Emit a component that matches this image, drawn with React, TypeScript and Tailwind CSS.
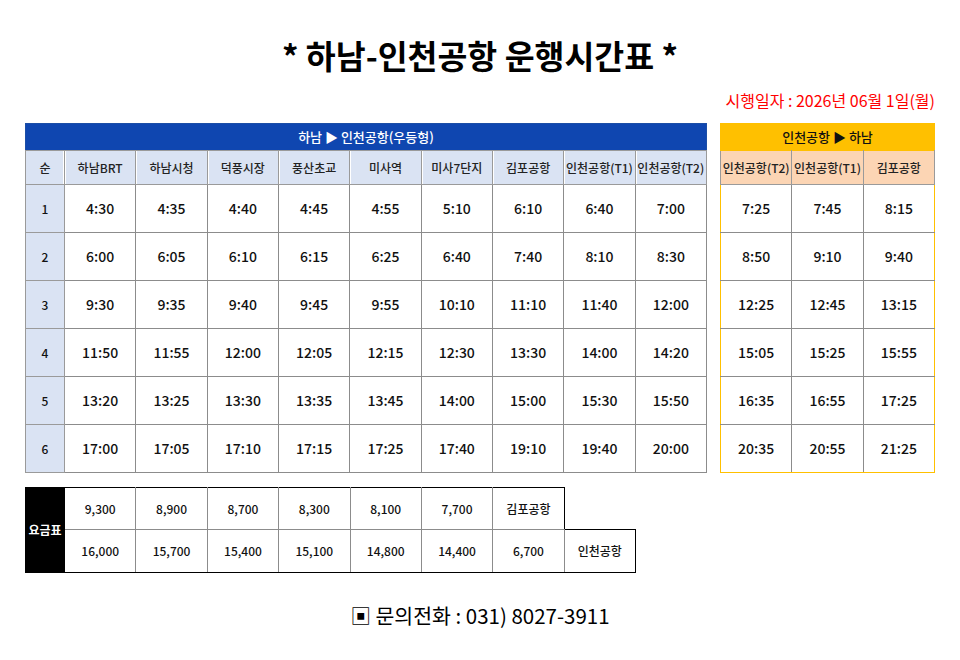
const outStops = ['하남BRT', '하남시청', '덕풍시장', '풍산초교', '미사역', '미사7단지', '김포공항', '인천공항(T1)', '인천공항(T2)']

const outTimes = [
  ['4:30', '4:35', '4:40', '4:45', '4:55', '5:10', '6:10', '6:40', '7:00'],
  ['6:00', '6:05', '6:10', '6:15', '6:25', '6:40', '7:40', '8:10', '8:30'],
  ['9:30', '9:35', '9:40', '9:45', '9:55', '10:10', '11:10', '11:40', '12:00'],
  ['11:50', '11:55', '12:00', '12:05', '12:15', '12:30', '13:30', '14:00', '14:20'],
  ['13:20', '13:25', '13:30', '13:35', '13:45', '14:00', '15:00', '15:30', '15:50'],
  ['17:00', '17:05', '17:10', '17:15', '17:25', '17:40', '19:10', '19:40', '20:00'],
]

const backStops = ['인천공항(T2)', '인천공항(T1)', '김포공항']

const backTimes = [
  ['7:25', '7:45', '8:15'],
  ['8:50', '9:10', '9:40'],
  ['12:25', '12:45', '13:15'],
  ['15:05', '15:25', '15:55'],
  ['16:35', '16:55', '17:25'],
  ['20:35', '20:55', '21:25'],
]

const toGimpo = ['9,300', '8,900', '8,700', '8,300', '8,100', '7,700']
const toIncheon = ['16,000', '15,700', '15,400', '15,100', '14,800', '14,400', '6,700']

const font = { fontFamily: '"Noto Sans CJK KR", "Noto Sans", sans-serif' }

export default function App() {
  return (
    <div className="w-[960px] h-[660px] bg-white px-[25px] text-[#111]" style={font}>
      <h1 className="pt-[34px] text-center text-[32.5px] font-bold leading-[42px] text-black">
        * 하남-인천공항 운행시간표 *
      </h1>
      <p className="mt-[14px] text-right text-[16px] leading-[20px] text-[#ff0000]">
        시행일자 : 2026년 06월 1일(월)
      </p>

      <div className="mt-[13px] flex items-start gap-[13px]">
        {/* 하남 -> 인천공항 */}
        <table className="w-[682px] table-fixed border-collapse border border-[#1c4ea6]">
          <colgroup>
            <col className="w-[39px]" />
            {outStops.map((s) => (
              <col key={s} />
            ))}
          </colgroup>
          <thead>
            <tr>
              <th colSpan={10} className="h-[27px] bg-[#0f46b0] text-[13px] font-medium text-white">
                하남 ▶ 인천공항(우등형)
              </th>
            </tr>
            <tr className="h-[34px] bg-[#dae3f3] text-[12px] font-medium text-[#222]">
              <th className="border border-[#9a9a9a] font-medium shadow-[inset_-1px_0_0_#fff]">순</th>
              {outStops.map((s) => (
                <th key={s} className="border border-[#9a9a9a] font-medium shadow-[inset_1px_0_0_#fff]">
                  {s}
                </th>
              ))}
            </tr>
          </thead>
          <tbody>
            {outTimes.map((row, i) => (
              <tr key={i} className="h-[48px]">
                <td className="border border-[#9a9a9a] bg-[#dae3f3] text-center text-[12px] font-medium">{i + 1}</td>
                {row.map((t, j) => (
                  <td key={j} className="border border-[#8c8c8c] text-center text-[14px] font-medium">
                    {t}
                  </td>
                ))}
              </tr>
            ))}
          </tbody>
        </table>

        {/* 인천공항 -> 하남 */}
        <table className="w-[215px] table-fixed border-collapse border border-[#ffc000]">
          <thead>
            <tr>
              <th colSpan={3} className="h-[27px] bg-[#ffc000] text-[13px] font-medium text-[#111]">
                인천공항 ▶ 하남
              </th>
            </tr>
            <tr className="h-[34px] bg-[#fcd5b4] text-[12px] text-[#222]">
              {backStops.map((s) => (
                <th key={s} className="border border-[#9a9a9a] border-t-[#ffc000] font-medium">
                  {s}
                </th>
              ))}
            </tr>
          </thead>
          <tbody>
            {backTimes.map((row, i) => (
              <tr key={i} className="h-[48px]">
                {row.map((t, j) => (
                  <td
                    key={j}
                    className={`border border-[#8c8c8c] text-center text-[14px] font-medium ${j === 0 ? 'border-l-[#ffc000]' : ''} ${j === 2 ? 'border-r-[#ffc000]' : ''} ${i === 5 ? 'border-b-[#ffc000]' : ''}`}
                  >
                    {t}
                  </td>
                ))}
              </tr>
            ))}
          </tbody>
        </table>
      </div>

      {/* 요금표 */}
      <table className="mt-[14px] w-[611px] table-fixed border-collapse text-[12px] font-medium">
        <colgroup>
          <col className="w-[39px]" />
          <col />
          <col />
          <col />
          <col />
          <col />
          <col />
          <col />
          <col />
        </colgroup>
        <tbody>
          <tr className="h-[42px]">
            <td rowSpan={2} className="border border-black bg-black text-center font-bold text-white">
              요금표
            </td>
            {toGimpo.map((f) => (
              <td key={f} className="border border-[#8c8c8c] border-t-black text-center">
                {f}
              </td>
            ))}
            <td className="border border-[#8c8c8c] border-t-black border-r-black text-center">김포공항</td>
            <td className="border-0" />
          </tr>
          <tr className="h-[43px]">
            {toIncheon.map((f) => (
              <td key={f} className="border border-[#8c8c8c] border-b-black text-center">
                {f}
              </td>
            ))}
            <td className="border border-black text-center">인천공항</td>
          </tr>
        </tbody>
      </table>

      <p className="mt-[28px] text-center text-[20.5px] font-normal leading-[28px] text-black">
        ▣ 문의전화 : 031) 8027-3911
      </p>
    </div>
  )
}
